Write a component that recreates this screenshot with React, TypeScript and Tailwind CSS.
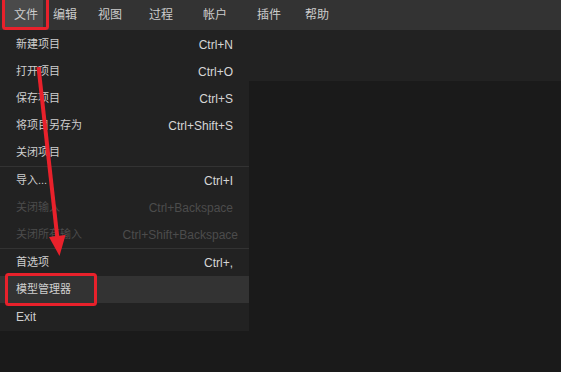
const font = '[font-family:"Liberation_Sans","Noto_Sans_CJK_SC",sans-serif]';

const topMenu = [
  { label: '文件', cls: 'ml-[5px] w-[38px] pl-[9px] bg-[#4a4a4a]' },
  { label: '编辑', cls: 'ml-[1px] w-[45px] pl-[9px]' },
  { label: '视图', cls: 'w-[51px] pl-[9px]' },
  { label: '过程', cls: 'w-[54px] pl-[9px]' },
  { label: '帐户', cls: 'w-[54px] pl-[9px]' },
  { label: '插件', cls: 'w-[48px] pl-[9px]' },
  { label: '帮助', cls: 'w-[50px] pl-[9px]' },
];

type Item = { label: string; shortcut?: string; disabled?: boolean; active?: boolean; latin?: boolean; wide?: boolean };

const groups: Item[][] = [
  [
    { label: '新建项目', shortcut: 'Ctrl+N' },
    { label: '打开项目', shortcut: 'Ctrl+O' },
    { label: '保存项目', shortcut: 'Ctrl+S' },
    { label: '将项目另存为', shortcut: 'Ctrl+Shift+S' },
    { label: '关闭项目' },
  ],
  [
    { label: '导入...', shortcut: 'Ctrl+I' },
    { label: '关闭输入', shortcut: 'Ctrl+Backspace', disabled: true },
    { label: '关闭所有输入', shortcut: 'Ctrl+Shift+Backspace', disabled: true, wide: true },
  ],
  [
    { label: '首选项', shortcut: 'Ctrl+,' },
    { label: '模型管理器', active: true },
    { label: 'Exit', latin: true },
  ],
];

function MenuRow({ item }: { item: Item }) {
  return (
    <div
      className={`flex h-[27px] items-center justify-between pl-[16px] pr-[16px] ${
        item.active ? 'bg-[#333333]' : ''
      }`}
    >
      <span
        className={`${item.latin ? 'text-[12px]' : 'text-[11px]'} ${
          item.disabled ? 'text-[#4c4c4c]' : 'text-[#cfcfcf]'
        }`}
      >
        {item.label}
      </span>
      {item.shortcut && (
        <span
          className={`text-[12px] whitespace-nowrap ${item.wide ? '-mr-[5px]' : ''} ${
            item.disabled ? 'text-[#4c4c4c]' : 'text-[#d6d6d6]'
          }`}
        >
          {item.shortcut}
        </span>
      )}
    </div>
  );
}

export default function App() {
  return (
    <div className={`relative h-[372px] w-[561px] overflow-hidden bg-[#1a1a1a] ${font}`}>
      {/* menu bar */}
      <div className="flex h-[30px] items-stretch bg-[#333333]">
        {topMenu.map((m) => (
          <div key={m.label} className={`flex items-center text-[12px] text-[#cccccc] ${m.cls}`}>
            {m.label}
          </div>
        ))}
      </div>

      {/* toolbar strip */}
      <div className="h-[51px] bg-[#222222]" />

      {/* file dropdown */}
      <div className="absolute left-0 top-[30px] w-[249px] bg-[#222222] py-[1px]">
        {groups.map((g, gi) => (
          <div key={gi}>
            {gi > 0 && <div className="h-[1px] bg-[#333333]" />}
            {g.map((item) => (
              <MenuRow key={item.label} item={item} />
            ))}
          </div>
        ))}
      </div>

      {/* annotation overlay */}
      <svg className="pointer-events-none absolute left-0 top-0" width="561" height="372">
        <rect x="3.5" y="-3" width="44" height="31.5" rx="2" fill="none" stroke="#e8212b" strokeWidth="3" />
        <rect x="6.5" y="274.5" width="89" height="30" rx="2" fill="none" stroke="#e8212b" strokeWidth="3" />
        <line x1="38.5" y1="67" x2="57.6" y2="240" stroke="#e8212b" strokeWidth="4" />
        <polygon points="49,237 65.5,235 59.5,256" fill="#e8212b" />
      </svg>
    </div>
  );
}
